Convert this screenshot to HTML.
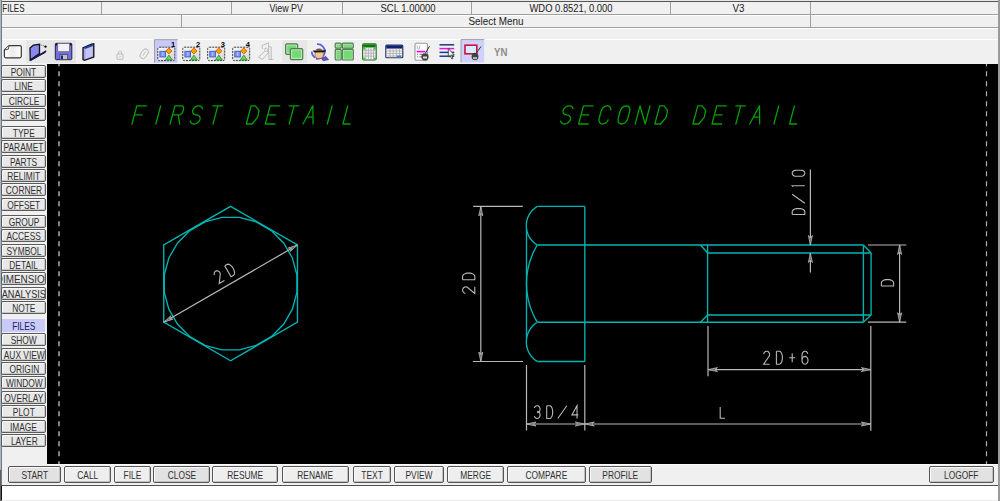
<!DOCTYPE html>
<html><head><meta charset="utf-8">
<style>
*{margin:0;padding:0;box-sizing:border-box}
html,body{width:1000px;height:501px;overflow:hidden;background:#f0f0f0;font-family:"Liberation Sans",sans-serif;position:relative}
.abs{position:absolute}
.hl{position:absolute;height:1px;background:#a0a0a0}
.hw{position:absolute;height:1px;background:#ffffff}
.vl{position:absolute;width:1px;background:#a0a0a0}
.vw{position:absolute;width:1px;background:#ffffff}
.lb{position:absolute;left:1px;width:45px;height:13px;border:1px solid #5a5a5a;box-shadow:inset 1px 1px 0 #fafafa, inset -1px -1px 0 #c8c8c8;background:#e8e8e8;text-align:center;color:#303030;white-space:nowrap;overflow:hidden;border-radius:2px;line-height:11px;font-size:0}
.lb span,.bb span{display:inline-block;font-size:11.8px;transform:scaleX(0.71);transform-origin:50% 50%;vertical-align:top}
.lb span{line-height:11px;margin:0 -30px;transform:translate(0.4px,0.5px) scaleX(0.71)}
.lb.sel{background:#cacaf8;border-color:#cacaf8;box-shadow:none;color:#202060;left:2px;width:43px;border-radius:0}
.bb{position:absolute;top:466px;height:17px;border:1px solid #555;box-shadow:inset 1px 1px 0 #fafafa, inset -1px -1px 0 #c0c0c0;background:#eeeeee;text-align:center;color:#303030;white-space:nowrap;border-radius:2px}
.bb{line-height:15px;font-size:0}
.bb.dk{background:#e2e2e2}
.bb span{line-height:16px;transform:translateY(-0.4px) scaleX(0.71)}
#draw{position:absolute;left:47px;top:64px;width:951px;height:400px;background:#000;overflow:hidden}
#draw svg{position:absolute;left:0;top:0}
</style></head><body>
<div class="abs" style="left:0;top:0;width:1000px;height:1px;background:#e8e8e8"></div>
<div class="abs" style="left:0;top:1px;width:1000px;height:1px;background:#555"></div>
<div class="abs" style="left:0;top:0;width:1px;height:501px;background:#a8b8c8"></div>
<div class="abs" style="left:1px;top:0;width:1px;height:501px;background:#7a7a7a"></div>
<div class="abs" style="left:998px;top:0;width:2px;height:501px;background:#9a9a9a"></div>

<div class="hl" style="left:2px;top:14px;width:996px"></div>
<div class="hw" style="left:2px;top:15px;width:996px"></div>
<div class="vl" style="left:101px;top:2px;height:12px"></div>
<div class="vl" style="left:231px;top:2px;height:12px"></div>
<div class="vl" style="left:342px;top:2px;height:12px"></div>
<div class="vl" style="left:471px;top:2px;height:12px"></div>
<div class="vl" style="left:670px;top:2px;height:12px"></div>
<div class="vl" style="left:810px;top:2px;height:25px"></div>
<div class="vl" style="left:181px;top:15px;height:12px"></div>
<div class="hl" style="left:2px;top:27px;width:996px"></div>
<div class="hw" style="left:2px;top:28px;width:996px"></div>
<div class="hw" style="left:2px;top:39px;width:996px"></div>
<svg class="abs" style="left:0;top:0" width="1000" height="40"><g font-family="Liberation Sans" font-size="11.3" fill="#202020"><text x="2.3" y="12.2" textLength="22.2" lengthAdjust="spacingAndGlyphs">FILES</text><text x="269.5" y="12.2" textLength="33.5" lengthAdjust="spacingAndGlyphs">View PV</text><text x="380.5" y="12.2" textLength="55.0" lengthAdjust="spacingAndGlyphs">SCL 1.00000</text><text x="529.5" y="12.2" textLength="83.0" lengthAdjust="spacingAndGlyphs">WDO 0.8521, 0.000</text><text x="732.5" y="12.2" textLength="12.0" lengthAdjust="spacingAndGlyphs">V3</text><text x="468.5" y="25.2" textLength="55.0" lengthAdjust="spacingAndGlyphs">Select Menu</text></g></svg>
<svg class="abs" style="left:0;top:0" width="1000" height="66"><defs><linearGradient id="imgbg" x1="0" x2="1" y1="0" y2="1"><stop offset="0" stop-color="#fafaf4"/><stop offset="1" stop-color="#d4d4d4"/></linearGradient><linearGradient id="docbg" x1="0" x2="1"><stop offset="0" stop-color="#ffffff"/><stop offset="0.5" stop-color="#ececec"/><stop offset="1" stop-color="#ffffff"/></linearGradient></defs><rect x="26" y="40" width="50" height="23" fill="#e6e6e6"/><rect x="282" y="40" width="25" height="23" fill="#e6e6e6"/><path d="M9 45.6 L19.8 45.6 Q21.3 45.6 21.3 47.1 L21.3 56.3 Q21.3 57.8 19.8 57.8 L5.9 57.8 Q4.4 57.8 4.4 56.3 L4.4 50 Z" fill="url(#docbg)" stroke="#383838" stroke-width="1.2" stroke-linejoin="round"/><path d="M9 45.8 L8.3 49.2 L4.8 49.8" fill="#f8f8f8" stroke="#404040" stroke-width="0.9"/><path d="M30 48 L33.5 45.2 L39.5 44.3 L39.5 53.5 L30.2 60 Z" fill="#8888f0" stroke="#101010" stroke-width="1.3"/><path d="M30.2 60 L46 50.8 L45.5 52.3 L31 60.4 Z" fill="#203090" stroke="#101040" stroke-width="1"/><path d="M39.5 44.5 L44 46" fill="none" stroke="#404040" stroke-width="0.8" stroke-dasharray="1,1"/><circle cx="45.5" cy="46.6" r="1.2" fill="#101010"/><rect x="55.3" y="43.3" width="16.5" height="16.4" rx="1.2" fill="#7070e0" stroke="#202040" stroke-width="1"/><rect x="57.8" y="43.5" width="11.5" height="8" fill="#f2f2f2" stroke="#606060" stroke-width="0.6"/><rect x="60" y="54.6" width="7.5" height="5" fill="#c0c0c0" stroke="#303030" stroke-width="0.6"/><rect x="61" y="55.5" width="2" height="3.5" fill="#1020a0"/><rect x="55.5" y="43.5" width="1.6" height="2" fill="#101030"/><rect x="70" y="43.5" width="1.6" height="2" fill="#101030"/><path d="M83 47.8 L91.5 44.2 L93.8 43.8 L93.8 57 L84.5 60.3 L83 59.5 Z" fill="#a4a4f0" stroke="#101010" stroke-width="1.3"/><path d="M85.5 49 L92.5 46 L92.5 56 L85.5 58.8 Z" fill="#c4c4f4"/><path d="M83.5 47.4 L92 44.2 L93.5 44.4 L93.5 45.8 L85 49 Z" fill="#2040a0"/><path d="M117 54 L117 59.3 L123 59.3 L123 54 Z M118.5 54 L118.5 51.8 Q120 50 121.5 51.8 L121.5 54" fill="none" stroke="#b8b8b8" stroke-width="0.9"/><path d="M118.5 57.5 L121.8 55.8" stroke="#c8c8c8" stroke-width="0.8"/><g transform="rotate(-55 144.2 53.8)"><rect x="139" y="50.8" width="10.5" height="6" rx="3" fill="none" stroke="#b4b4b4" stroke-width="0.9"/><path d="M141.5 53.8 L147 53.8" stroke="#c0c0c0" stroke-width="0.8"/></g><rect x="154.5" y="39.7" width="23.5" height="23" fill="#c8c8fa"/><path d="M154.5 62.7 L154.5 39.7 L178 39.7" fill="none" stroke="#a0a0a0" stroke-width="1"/><path d="M178 39.7 L178 62.7" fill="none" stroke="#f8f8f8" stroke-width="1"/><rect x="157.8" y="47.2" width="17" height="13.4" rx="1.5" fill="url(#imgbg)" stroke="#383838" stroke-width="1" stroke-dasharray="2,1"/><rect x="159.9" y="51.3" width="5.6" height="5.6" fill="#8c90f0" stroke="#3868d0" stroke-width="1"/><rect x="162.1" y="52.3" width="1.2" height="3.6" fill="#b8bcf8"/><polygon points="168.9,48.1 172.0,51.0 168.9,53.9 165.8,51.0" fill="#f8a800" stroke="#d85000" stroke-width="0.9"/><polygon points="168.9,55.1 172.3,59.9 165.5,59.9" fill="#78c878" stroke="#28a028" stroke-width="0.9"/><text x="170.9" y="46.9" font-family="Liberation Sans" font-weight="bold" font-size="7.5" fill="#000">1</text><rect x="182.8" y="47.2" width="17" height="13.4" rx="1.5" fill="url(#imgbg)" stroke="#383838" stroke-width="1" stroke-dasharray="2,1"/><rect x="184.9" y="51.3" width="5.6" height="5.6" fill="#8c90f0" stroke="#3868d0" stroke-width="1"/><rect x="187.1" y="52.3" width="1.2" height="3.6" fill="#b8bcf8"/><polygon points="193.9,48.1 197.0,51.0 193.9,53.9 190.8,51.0" fill="#f8a800" stroke="#d85000" stroke-width="0.9"/><polygon points="193.9,55.1 197.3,59.9 190.5,59.9" fill="#78c878" stroke="#28a028" stroke-width="0.9"/><text x="195.9" y="46.9" font-family="Liberation Sans" font-weight="bold" font-size="7.5" fill="#000">2</text><rect x="207.7" y="47.2" width="17" height="13.4" rx="1.5" fill="url(#imgbg)" stroke="#383838" stroke-width="1" stroke-dasharray="2,1"/><rect x="209.8" y="51.3" width="5.6" height="5.6" fill="#8c90f0" stroke="#3868d0" stroke-width="1"/><rect x="212.0" y="52.3" width="1.2" height="3.6" fill="#b8bcf8"/><polygon points="218.8,48.1 221.9,51.0 218.8,53.9 215.7,51.0" fill="#f8a800" stroke="#d85000" stroke-width="0.9"/><polygon points="218.8,55.1 222.2,59.9 215.4,59.9" fill="#78c878" stroke="#28a028" stroke-width="0.9"/><text x="220.8" y="46.9" font-family="Liberation Sans" font-weight="bold" font-size="7.5" fill="#000">3</text><rect x="232.7" y="47.2" width="17" height="13.4" rx="1.5" fill="url(#imgbg)" stroke="#383838" stroke-width="1" stroke-dasharray="2,1"/><rect x="234.8" y="51.3" width="5.6" height="5.6" fill="#8c90f0" stroke="#3868d0" stroke-width="1"/><rect x="237.0" y="52.3" width="1.2" height="3.6" fill="#b8bcf8"/><polygon points="243.8,48.1 246.9,51.0 243.8,53.9 240.7,51.0" fill="#f8a800" stroke="#d85000" stroke-width="0.9"/><polygon points="243.8,55.1 247.2,59.9 240.4,59.9" fill="#78c878" stroke="#28a028" stroke-width="0.9"/><text x="245.8" y="46.9" font-family="Liberation Sans" font-weight="bold" font-size="7.5" fill="#000">4</text><path d="M262.5 49 L262 45.5 L268.5 42.8 L269 59.5 L273.5 59.5 M269 46.5 L271.2 47 L271.2 59.5 M258.5 57 L264.5 51.5 Q266.5 50 268.5 52.5 L262.5 59.5 Z M264.5 50.5 Q264.5 47.5 266.5 48 Q268.5 49 267.5 51.5" fill="none" stroke="#b0b0b0" stroke-width="0.8"/><rect x="285.6" y="43.8" width="12" height="10.6" rx="1.2" fill="#bfe0bf" stroke="#4e7e4e" stroke-width="1.2"/><rect x="287.3" y="45.6" width="8.6" height="7" fill="#70dc70"/><rect x="290.4" y="48.6" width="12.3" height="11" rx="1.2" fill="#bfe0bf" stroke="#4e7e4e" stroke-width="1.2"/><rect x="292.1" y="50.4" width="8.9" height="7.4" fill="#70dc70"/><path d="M317 44.2 A7.3 7.3 0 1 1 316 58.6" fill="none" stroke="#6060e8" stroke-width="1.8"/><path d="M311.8 51.5 A7.3 7.3 0 0 0 315.5 57.8" fill="none" stroke="#6060e8" stroke-width="1.8"/><ellipse cx="319.2" cy="54.6" rx="4.2" ry="3.9" fill="#f6c890" stroke="#7a4a20" stroke-width="0.6"/><path d="M312.8 50.6 L326.2 50.2 L325 52.2 L314.2 52.4 Z" fill="#181818"/><path d="M315.5 50 Q319 47.3 322.8 49.8 Z" fill="#6a4420"/><path d="M321.5 58.6 L325.8 56.4 L328.6 59.6 L323.2 60.8 Z" fill="#5858d8" stroke="#282870" stroke-width="0.6"/><g fill="#bfe0bf" stroke="#4e7e4e" stroke-width="1.2"><rect x="335.2" y="43.2" width="6" height="5" rx="1"/><rect x="342.3" y="43.2" width="11" height="5" rx="1"/><rect x="335.2" y="49.4" width="6" height="10.6" rx="1"/><rect x="342.3" y="49.4" width="11" height="10.6" rx="1"/></g><g fill="#70dc70"><rect x="336.6" y="44.6" width="3.2" height="2.2"/><rect x="343.7" y="44.6" width="8.2" height="2.2"/><rect x="336.6" y="50.8" width="3.2" height="7.8"/><rect x="343.7" y="50.8" width="8.2" height="7.8"/></g><rect x="362.6" y="43.8" width="13.6" height="16.2" rx="1.2" fill="#f4eef8" stroke="#1c701c" stroke-width="1.1"/><rect x="363.1" y="44.3" width="12.6" height="3.2" fill="#0c780c"/><path d="M363.5 50.3 L375.6 50.3 M363.5 53.2 L375.6 53.2 M363.5 56.1 L375.6 56.1 M365.8 47.5 L365.8 59.5 M368.4 47.5 L368.4 59.5 M371 47.5 L371 59.5 M373.5 47.5 L373.5 59.5" stroke="#a8a8a8" stroke-width="0.8"/><rect x="363.2" y="47.6" width="2" height="2" fill="#40c040"/><rect x="373.8" y="47.6" width="2" height="2" fill="#40c040"/><rect x="363.2" y="57.6" width="2" height="2" fill="#40c040"/><rect x="373.8" y="57.6" width="2" height="2" fill="#40c040"/><rect x="385.8" y="45" width="17" height="12.8" rx="1" fill="#f4f4f4" stroke="#203060" stroke-width="1.1"/><rect x="386.2" y="45.3" width="16.2" height="3.3" fill="#102070"/><path d="M387 51 L402 51 M387 53.5 L402 53.5 M387 56 L402 56 M390 48.6 L390 57.5 M393.2 48.6 L393.2 57.5 M396.4 48.6 L396.4 57.5 M399.5 48.6 L399.5 57.5" stroke="#a8a8a8" stroke-width="0.8"/><rect x="396.8" y="55.5" width="4.5" height="2" fill="#4080c0"/><rect x="415" y="43.3" width="12.4" height="17" rx="1.3" fill="#fafafa" stroke="#9a9a9a" stroke-width="1.1"/><path d="M417 45.5 L418 49.5 M420 45.5 L419 49.5" stroke="#b0b0d8" stroke-width="0.9"/><rect x="416.8" y="50.8" width="8.6" height="1.6" fill="#f000f0"/><path d="M417 54.3 L418 54.3 M417 56.8 L418 56.8 M419.5 54.3 L424 54.3 M419.5 56.8 L424 56.8" stroke="#505050" stroke-width="0.8"/><path d="M425.5 53 L429.5 46.2" stroke="#303030" stroke-width="1"/><ellipse cx="425" cy="56.8" rx="3.6" ry="3.6" fill="#404040"/><rect x="423" y="56.5" width="4" height="2" fill="#e0e0e0"/><g stroke-width="1.5"><path d="M439.5 44.8 L454.2 44.8" stroke="#1a3a8a"/><path d="M439.5 48.6 L454.2 48.6" stroke="#f010e0"/><path d="M439.5 52.4 L454.2 52.4" stroke="#1a3a8a"/><path d="M439.5 56.2 L454.2 56.2" stroke="#1a3a8a"/></g><path d="M448.3 48.5 L448.3 57 L450.2 55.3 L451.8 59 L453 58.5 L451.5 55 L454.3 55 Z" fill="#f8f8f8" stroke="#303030" stroke-width="0.8"/><rect x="461" y="39.6" width="23.2" height="22.8" fill="#d0d0fc"/><path d="M461 62.4 L461 39.6 L484.2 39.6" fill="none" stroke="#a0a0a0" stroke-width="1"/><rect x="465" y="45.2" width="11.8" height="8.6" fill="#d8ecff" stroke="#d01040" stroke-width="1.6"/><path d="M476 53.5 L481 46.5" stroke="#303030" stroke-width="1"/><ellipse cx="475" cy="56.5" rx="3.4" ry="3.8" fill="#404040"/><rect x="473" y="57" width="4" height="2.2" fill="#b0b0b0"/><text x="494" y="55.6" font-family="Liberation Sans" font-weight="bold" font-size="10" fill="#8c8c8c" textLength="13.4" lengthAdjust="spacingAndGlyphs">YN</text></svg>
<div class="lb" style="top:65px"><span>POINT</span></div>
<div class="lb" style="top:79px"><span>LINE</span></div>
<div class="lb" style="top:94px"><span>CIRCLE</span></div>
<div class="lb" style="top:108px"><span>SPLINE</span></div>
<div class="lb" style="top:126px"><span>TYPE</span></div>
<div class="lb" style="top:140px"><span>PARAMET</span></div>
<div class="lb" style="top:155px"><span>PARTS</span></div>
<div class="lb" style="top:169px"><span>RELIMIT</span></div>
<div class="lb" style="top:183px"><span>CORNER</span></div>
<div class="lb" style="top:198px"><span>OFFSET</span></div>
<div class="lb" style="top:215px"><span>GROUP</span></div>
<div class="lb" style="top:229px"><span>ACCESS</span></div>
<div class="lb" style="top:244px"><span>SYMBOL</span></div>
<div class="lb" style="top:258px"><span>DETAIL</span></div>
<div class="lb" style="top:272px"><span style="transform:translate(0.4px,0.5px) scaleX(0.84)">DIMENSION</span></div>
<div class="lb" style="top:287px"><span style="transform:translate(0.4px,0.5px) scaleX(0.78)">ANALYSIS</span></div>
<div class="lb" style="top:301px"><span>NOTE</span></div>
<div class="lb sel" style="top:319px"><span>FILES</span></div>
<div class="lb" style="top:333px"><span>SHOW</span></div>
<div class="lb" style="top:348px"><span>AUX VIEW</span></div>
<div class="lb" style="top:362px"><span>ORIGIN</span></div>
<div class="lb" style="top:376px"><span>WINDOW</span></div>
<div class="lb" style="top:391px"><span>OVERLAY</span></div>
<div class="lb" style="top:405px"><span>PLOT</span></div>
<div class="lb" style="top:420px"><span>IMAGE</span></div>
<div class="lb" style="top:434px"><span>LAYER</span></div>
<div id="draw"><svg width="951" height="400" viewBox="47 64 951 400">
<path d="M132.00 124.00 L136.80 105.80 L146.40 105.80 M134.40 114.90 L142.08 114.90 M160.65 105.80 L155.85 124.00 M170.10 124.00 L174.90 105.80 L181.81 105.80 L181.81 105.80 L182.75 106.15 L183.36 107.13 L183.55 108.61 L183.30 110.35 L182.64 112.09 L181.66 113.57 L180.53 114.55 L179.41 114.90 L172.50 114.90 M178.26 114.90 L179.70 124.00 M202.47 108.79 L202.14 107.68 L201.45 106.76 L200.46 106.13 L199.25 105.82 L197.90 105.87 L196.52 106.26 L195.23 106.97 L194.12 107.94 L193.27 109.10 L192.75 110.35 L192.60 111.53 L192.79 112.62 L193.31 113.57 L194.11 114.29 L195.15 114.74 L196.35 114.90 L197.55 115.06 L198.59 115.51 L199.39 116.23 L199.91 117.17 L200.10 118.27 L199.95 119.45 L199.43 120.70 L198.58 121.86 L197.47 122.83 L196.18 123.54 L194.80 123.93 L193.45 123.98 L192.24 123.67 L191.25 123.04 L190.56 122.12 L190.23 121.01 M213.00 105.80 L222.60 105.80 M217.80 105.80 L213.00 124.00 M251.10 105.80 L246.30 124.00 L252.06 124.00 L257.72 117.08 L259.02 110.35 L255.42 105.80 L251.10 105.80 M279.75 105.80 L270.15 105.80 L265.35 124.00 L274.95 124.00 M267.75 114.90 L275.43 114.90 M289.20 105.80 L298.80 105.80 M294.00 105.80 L289.20 124.00 M303.05 124.00 L312.85 105.80 L313.05 124.00 M306.87 117.08 L312.87 117.08 M332.10 105.80 L327.30 124.00 M347.75 105.80 L342.95 124.00 L350.09 124.00 M572.92 108.79 L572.59 107.68 L571.90 106.76 L570.91 106.13 L569.70 105.82 L568.35 105.87 L566.97 106.26 L565.68 106.97 L564.57 107.94 L563.72 109.10 L563.20 110.35 L563.05 111.53 L563.24 112.62 L563.76 113.57 L564.56 114.29 L565.60 114.74 L566.80 114.90 L568.00 115.06 L569.04 115.51 L569.84 116.23 L570.36 117.17 L570.55 118.27 L570.40 119.45 L569.88 120.70 L569.03 121.86 L567.92 122.83 L566.63 123.54 L565.25 123.93 L563.90 123.98 L562.69 123.67 L561.70 123.04 L561.01 122.12 L560.68 121.01 M593.05 105.80 L583.45 105.80 L578.65 124.00 L588.25 124.00 M581.05 114.90 L588.73 114.90 M610.87 109.85 L610.71 108.41 L610.14 107.20 L609.23 106.33 L608.03 105.87 L606.66 105.85 L605.22 106.27 L603.84 107.11 L602.62 108.29 L601.67 109.71 L601.06 111.26 L599.14 118.54 L598.93 120.09 L599.13 121.51 L599.73 122.69 L600.67 123.53 L601.89 123.95 L603.27 123.93 L604.71 123.47 L606.08 122.60 L607.28 121.39 L608.20 119.95 M629.71 111.26 L629.92 109.57 L629.64 108.05 L628.90 106.84 L627.76 106.07 L626.35 105.80 L624.80 106.07 L623.25 106.84 L621.87 108.05 L620.79 109.57 L620.11 111.26 L618.19 118.54 L617.98 120.23 L618.26 121.75 L619.00 122.96 L620.14 123.73 L621.55 124.00 L623.10 123.73 L624.65 122.96 L626.03 121.75 L627.11 120.23 L627.79 118.54 L629.71 111.26 M635.20 124.00 L640.00 105.80 L645.20 124.00 L650.00 105.80 M659.65 105.80 L654.85 124.00 L660.61 124.00 L666.27 117.08 L667.57 110.35 L663.97 105.80 L659.65 105.80 M697.75 105.80 L692.95 124.00 L698.71 124.00 L704.37 117.08 L705.67 110.35 L702.07 105.80 L697.75 105.80 M726.40 105.80 L716.80 105.80 L712.00 124.00 L721.60 124.00 M714.40 114.90 L722.08 114.90 M735.85 105.80 L745.45 105.80 M740.65 105.80 L735.85 124.00 M749.70 124.00 L759.50 105.80 L759.70 124.00 M753.52 117.08 L759.52 117.08 M778.75 105.80 L773.95 124.00 M794.40 105.80 L789.60 124.00 L796.74 124.00" stroke="#00a000" fill="none" stroke-width="1.3" stroke-linecap="round" stroke-linejoin="round"/>
<polygon points="230.60,206.40 297.46,245.00 297.46,322.20 230.60,360.80 163.74,322.20 163.74,245.00" stroke="#00b4b4" fill="none" stroke-width="1.35"/>
<polygon points="239.33,217.31 256.19,221.83 271.30,230.56 283.64,242.90 292.37,258.01 296.89,274.87 296.89,292.33 292.37,309.19 283.64,324.30 271.30,336.64 256.19,345.37 239.33,349.89 221.87,349.89 205.01,345.37 189.90,336.64 177.56,324.30 168.83,309.19 164.31,292.33 164.31,274.87 168.83,258.01 177.56,242.90 189.90,230.56 205.01,221.83 221.87,217.31" stroke="#00b4b4" fill="none" stroke-width="1.35"/>
<line x1="163.74" y1="322.20" x2="297.46" y2="245.00" stroke="#b8b8b8" stroke-width="1.20"/>
<polygon points="297.46,245.00 290.23,251.48 291.39,248.50 288.23,248.02" fill="#707070" stroke="#b8b8b8" stroke-width="0.8" stroke-linejoin="miter"/>
<polygon points="163.74,322.20 170.97,315.72 169.81,318.70 172.97,319.18" fill="#707070" stroke="#b8b8b8" stroke-width="0.8" stroke-linejoin="miter"/>
<path d="M214.41 275.06 L214.17 273.98 L214.26 272.91 L214.68 271.97 L215.38 271.26 L216.29 270.86 L217.30 270.82 L218.31 271.13 L219.21 271.76 L219.89 272.65 L220.29 273.70 L219.26 283.56 L224.46 280.56 M224.74 265.85 L231.04 276.76 L233.64 275.26 L234.29 274.53 L234.56 273.34 L234.44 271.80 L233.93 270.07 L233.09 268.31 L231.99 266.70 L230.74 265.39 L229.47 264.51 L228.30 264.16 L227.34 264.35 L224.74 265.85" stroke="#b8b8b8" fill="none" stroke-width="1.1"/>
<line x1="537.30" y1="206.40" x2="584.80" y2="206.40" stroke="#00b4b4" stroke-width="1.35"/>
<line x1="584.80" y1="206.40" x2="584.80" y2="361.50" stroke="#00b4b4" stroke-width="1.35"/>
<line x1="537.30" y1="361.50" x2="584.80" y2="361.50" stroke="#00b4b4" stroke-width="1.35"/>
<path d="M537.30 206.40 L535.36 207.68 L533.56 209.16 L531.93 210.81 L530.47 212.63 L529.21 214.58 L528.16 216.66 L527.34 218.83 L526.74 221.08 L526.38 223.38 L526.26 225.70 L526.38 228.02 L526.74 230.32 L527.34 232.57 L528.16 234.74 L529.21 236.82 L530.47 238.77 L531.93 240.59 L533.56 242.24 L535.36 243.72 L537.30 245.00 M537.30 245.00 L535.29 248.52 L533.47 252.15 L531.86 255.88 L530.45 259.68 L529.25 263.56 L528.26 267.49 L527.49 271.48 L526.94 275.50 L526.61 279.54 L526.50 283.60 L526.61 287.66 L526.94 291.70 L527.49 295.72 L528.26 299.71 L529.25 303.64 L530.45 307.52 L531.86 311.32 L533.47 315.05 L535.29 318.68 L537.30 322.20 M537.30 322.20 L535.36 323.53 L533.57 325.05 L531.94 326.75 L530.50 328.60 L529.24 330.59 L528.20 332.70 L527.38 334.90 L526.79 337.18 L526.43 339.50 L526.31 341.85 L526.43 344.20 L526.79 346.52 L527.38 348.80 L528.20 351.00 L529.24 353.11 L530.50 355.10 L531.94 356.95 L533.57 358.65 L535.36 360.17 L537.30 361.50" stroke="#00b4b4" fill="none" stroke-width="1.35"/>
<line x1="526.50" y1="229.00" x2="526.50" y2="338.90" stroke="#00b4b4" stroke-width="1.35"/>
<line x1="537.30" y1="245.00" x2="863.40" y2="245.00" stroke="#00b4b4" stroke-width="1.35"/>
<line x1="537.30" y1="322.20" x2="863.40" y2="322.20" stroke="#00b4b4" stroke-width="1.35"/>
<line x1="707.60" y1="253.00" x2="871.10" y2="253.00" stroke="#00b4b4" stroke-width="1.35"/>
<line x1="707.60" y1="315.00" x2="871.10" y2="315.00" stroke="#00b4b4" stroke-width="1.35"/>
<line x1="707.60" y1="245.00" x2="707.60" y2="322.20" stroke="#00b4b4" stroke-width="1.35"/>
<line x1="700.50" y1="245.00" x2="707.60" y2="253.00" stroke="#00b4b4" stroke-width="1.35"/>
<line x1="700.50" y1="322.20" x2="707.60" y2="315.00" stroke="#00b4b4" stroke-width="1.35"/>
<line x1="863.40" y1="245.00" x2="863.40" y2="322.20" stroke="#00b4b4" stroke-width="1.35"/>
<line x1="863.40" y1="245.00" x2="871.10" y2="253.00" stroke="#00b4b4" stroke-width="1.35"/>
<line x1="863.40" y1="322.20" x2="871.10" y2="315.00" stroke="#00b4b4" stroke-width="1.35"/>
<line x1="871.10" y1="253.00" x2="871.10" y2="315.00" stroke="#00b4b4" stroke-width="1.35"/>
<line x1="473.20" y1="206.40" x2="522.80" y2="206.40" stroke="#b8b8b8" stroke-width="1.20"/>
<line x1="472.80" y1="361.50" x2="523.00" y2="361.50" stroke="#b8b8b8" stroke-width="1.20"/>
<line x1="480.80" y1="206.40" x2="480.80" y2="361.50" stroke="#b8b8b8" stroke-width="1.20"/>
<polygon points="480.80,206.40 482.80,215.90 480.80,213.40 478.80,215.90" fill="#707070" stroke="#b8b8b8" stroke-width="0.8" stroke-linejoin="miter"/>
<polygon points="480.80,361.50 478.80,352.00 480.80,354.50 482.80,352.00" fill="#707070" stroke="#b8b8b8" stroke-width="0.8" stroke-linejoin="miter"/>
<path d="M465.32 293.45 L464.30 293.08 L463.45 292.39 L462.86 291.46 L462.61 290.38 L462.71 289.28 L463.16 288.28 L463.91 287.47 L464.88 286.96 L465.95 286.80 L467.02 287.00 L474.80 293.50 L474.80 286.80 M462.60 279.70 L474.80 279.70 L474.80 276.35 L474.50 275.31 L473.64 274.38 L472.29 273.64 L470.59 273.16 L468.70 273.00 L466.81 273.16 L465.11 273.64 L463.76 274.38 L462.90 275.31 L462.60 276.35 L462.60 279.70" stroke="#b8b8b8" fill="none" stroke-width="1.1"/>
<line x1="526.50" y1="365.00" x2="526.50" y2="430.50" stroke="#b8b8b8" stroke-width="1.20"/>
<line x1="584.80" y1="365.00" x2="584.80" y2="430.50" stroke="#b8b8b8" stroke-width="1.20"/>
<line x1="526.50" y1="424.00" x2="584.80" y2="424.00" stroke="#b8b8b8" stroke-width="1.20"/>
<polygon points="526.50,424.00 536.00,422.00 533.50,424.00 536.00,426.00" fill="#707070" stroke="#b8b8b8" stroke-width="0.8" stroke-linejoin="miter"/>
<polygon points="584.80,424.00 575.30,426.00 577.80,424.00 575.30,422.00" fill="#707070" stroke="#b8b8b8" stroke-width="0.8" stroke-linejoin="miter"/>
<path d="M534.28 407.97 L534.83 406.90 L535.68 406.11 L536.71 405.73 L537.79 405.79 L538.78 406.30 L539.56 407.17 L540.01 408.31 L540.08 409.56 L539.76 410.75 L539.09 411.74 L538.17 412.39 L537.10 412.61 M537.10 411.33 L538.17 411.57 L539.09 412.24 L539.76 413.26 L540.08 414.50 L540.01 415.79 L539.56 416.97 L538.78 417.88 L537.79 418.40 L536.71 418.47 L535.68 418.07 L534.83 417.26 L534.28 416.14 M546.70 405.70 L546.70 418.50 L549.70 418.50 L550.63 418.19 L551.46 417.28 L552.13 415.86 L552.55 414.08 L552.70 412.10 L552.55 410.12 L552.13 408.34 L551.46 406.92 L550.63 406.01 L549.70 405.70 L546.70 405.70 M557.80 418.50 L566.80 405.70 M577.02 418.50 L577.02 405.70 L571.90 414.92 L578.30 414.92" stroke="#b8b8b8" fill="none" stroke-width="1.1"/>
<line x1="584.80" y1="424.00" x2="870.80" y2="424.00" stroke="#b8b8b8" stroke-width="1.20"/>
<polygon points="584.80,424.00 594.30,422.00 591.80,424.00 594.30,426.00" fill="#707070" stroke="#b8b8b8" stroke-width="0.8" stroke-linejoin="miter"/>
<polygon points="870.80,424.00 861.30,426.00 863.80,424.00 861.30,422.00" fill="#707070" stroke="#b8b8b8" stroke-width="0.8" stroke-linejoin="miter"/>
<path d="M720.20 407.00 L720.20 418.20 L724.96 418.20" stroke="#b8b8b8" fill="none" stroke-width="1.1"/>
<line x1="708.00" y1="326.00" x2="708.00" y2="376.30" stroke="#b8b8b8" stroke-width="1.20"/>
<line x1="870.80" y1="326.00" x2="870.80" y2="430.70" stroke="#b8b8b8" stroke-width="1.20"/>
<line x1="708.00" y1="369.60" x2="870.80" y2="369.60" stroke="#b8b8b8" stroke-width="1.20"/>
<polygon points="708.00,369.60 717.50,367.60 715.00,369.60 717.50,371.60" fill="#707070" stroke="#b8b8b8" stroke-width="0.8" stroke-linejoin="miter"/>
<polygon points="870.80,369.60 861.30,371.60 863.80,369.60 861.30,367.60" fill="#707070" stroke="#b8b8b8" stroke-width="0.8" stroke-linejoin="miter"/>
<path d="M763.65 354.10 L763.98 353.01 L764.59 352.10 L765.43 351.48 L766.39 351.21 L767.38 351.32 L768.28 351.80 L769.00 352.60 L769.45 353.63 L769.60 354.77 L769.42 355.91 L763.60 364.20 L769.60 364.20 M776.40 351.20 L776.40 364.20 L779.40 364.20 L780.33 363.88 L781.16 362.96 L781.83 361.52 L782.25 359.71 L782.40 357.70 L782.25 355.69 L781.83 353.88 L781.16 352.44 L780.33 351.52 L779.40 351.20 L776.40 351.20 M792.20 353.15 L792.20 362.25 M789.20 357.70 L795.20 357.70 M807.82 353.77 L807.30 352.59 L806.50 351.72 L805.52 351.26 L804.48 351.26 L803.50 351.72 L802.70 352.59 L802.18 353.77 L802.00 355.10 L802.00 360.30 L802.00 360.30 L802.15 361.51 L802.57 362.59 L803.24 363.46 L804.07 364.01 L805.00 364.20 L805.93 364.01 L806.76 363.46 L807.43 362.59 L807.85 361.51 L808.00 360.30 L807.85 359.09 L807.43 358.01 L806.76 357.14 L805.93 356.59 L805.00 356.40 L804.07 356.59 L803.24 357.14 L802.57 358.01 L802.15 359.09 L802.00 360.30" stroke="#b8b8b8" fill="none" stroke-width="1.1"/>
<line x1="868.00" y1="245.00" x2="906.30" y2="245.00" stroke="#b8b8b8" stroke-width="1.20"/>
<line x1="868.00" y1="322.20" x2="906.30" y2="322.20" stroke="#b8b8b8" stroke-width="1.20"/>
<line x1="899.60" y1="245.00" x2="899.60" y2="322.20" stroke="#b8b8b8" stroke-width="1.20"/>
<polygon points="899.60,245.00 901.60,254.50 899.60,252.00 897.60,254.50" fill="#707070" stroke="#b8b8b8" stroke-width="0.8" stroke-linejoin="miter"/>
<polygon points="899.60,322.20 897.60,312.70 899.60,315.20 901.60,312.70" fill="#707070" stroke="#b8b8b8" stroke-width="0.8" stroke-linejoin="miter"/>
<path d="M881.40 286.00 L893.60 286.00 L893.60 282.75 L893.30 281.75 L892.44 280.84 L891.09 280.12 L889.39 279.66 L887.50 279.50 L885.61 279.66 L883.91 280.12 L882.56 280.84 L881.70 281.75 L881.40 282.75 L881.40 286.00" stroke="#b8b8b8" fill="none" stroke-width="1.1"/>
<line x1="810.40" y1="169.40" x2="810.40" y2="245.00" stroke="#b8b8b8" stroke-width="1.20"/>
<line x1="810.40" y1="253.00" x2="810.40" y2="272.50" stroke="#b8b8b8" stroke-width="1.20"/>
<polygon points="810.40,245.00 808.40,235.50 810.40,238.00 812.40,235.50" fill="#707070" stroke="#b8b8b8" stroke-width="0.8" stroke-linejoin="miter"/>
<polygon points="810.40,253.00 812.40,262.50 810.40,260.00 808.40,262.50" fill="#707070" stroke="#b8b8b8" stroke-width="0.8" stroke-linejoin="miter"/>
<path d="M792.20 214.50 L804.80 214.50 L804.80 211.50 L804.49 210.57 L803.60 209.74 L802.20 209.07 L800.45 208.65 L798.50 208.50 L796.55 208.65 L794.80 209.07 L793.40 209.74 L792.51 210.57 L792.20 211.50 L792.20 214.50 M804.80 203.25 L792.20 194.25 M792.96 186.60 L792.20 185.70 L804.80 185.70 M795.98 170.25 L794.81 170.40 L793.76 170.82 L792.92 171.49 L792.39 172.32 L792.20 173.25 L792.39 174.18 L792.92 175.01 L793.76 175.68 L794.81 176.10 L795.98 176.25 L801.02 176.25 L802.19 176.10 L803.24 175.68 L804.08 175.01 L804.61 174.18 L804.80 173.25 L804.61 172.32 L804.08 171.49 L803.24 170.82 L802.19 170.40 L801.02 170.25 L795.98 170.25" stroke="#b8b8b8" fill="none" stroke-width="1.1"/>
<line x1="59" y1="64" x2="59" y2="464" stroke="#808080" stroke-width="2" stroke-dasharray="5,5" stroke-dashoffset="2.8"/>
<line x1="986.5" y1="64" x2="986.5" y2="464" stroke="#b0b0b0" stroke-width="1.2" stroke-dasharray="5,5" stroke-dashoffset="2.8"/>
</svg></div>
<div class="abs" style="left:47px;top:464px;width:951px;height:1px;background:#fafafa"></div>
<div class="bb dk" style="left:8px;width:53px"><span>START</span></div>
<div class="bb" style="left:64px;width:47px"><span>CALL</span></div>
<div class="bb" style="left:114px;width:37px"><span>FILE</span></div>
<div class="bb dk" style="left:153px;width:57px"><span>CLOSE</span></div>
<div class="bb" style="left:212px;width:66px"><span>RESUME</span></div>
<div class="bb" style="left:282px;width:67px"><span>RENAME</span></div>
<div class="bb" style="left:353px;width:38px"><span>TEXT</span></div>
<div class="bb" style="left:394px;width:50px"><span>PVIEW</span></div>
<div class="bb" style="left:447px;width:57px"><span>MERGE</span></div>
<div class="bb" style="left:507px;width:79px"><span>COMPARE</span></div>
<div class="bb dk" style="left:589px;width:63px"><span>PROFILE</span></div>
<div class="bb dk" style="left:929px;width:65px"><span>LOGOFF</span></div>
<div class="abs" style="left:1px;top:485px;width:997px;height:1px;background:#505050"></div>
<div class="abs" style="left:2px;top:486px;width:996px;height:14px;background:#ffffff"></div>
<div class="abs" style="left:2px;top:500px;width:996px;height:1px;background:#ececec"></div>
<div class="abs" style="left:0;top:470px;width:1px;height:31px;background:#5a6068"></div>
<div class="abs" style="left:1px;top:486px;width:1px;height:14px;background:#101010"></div>
</body></html>
